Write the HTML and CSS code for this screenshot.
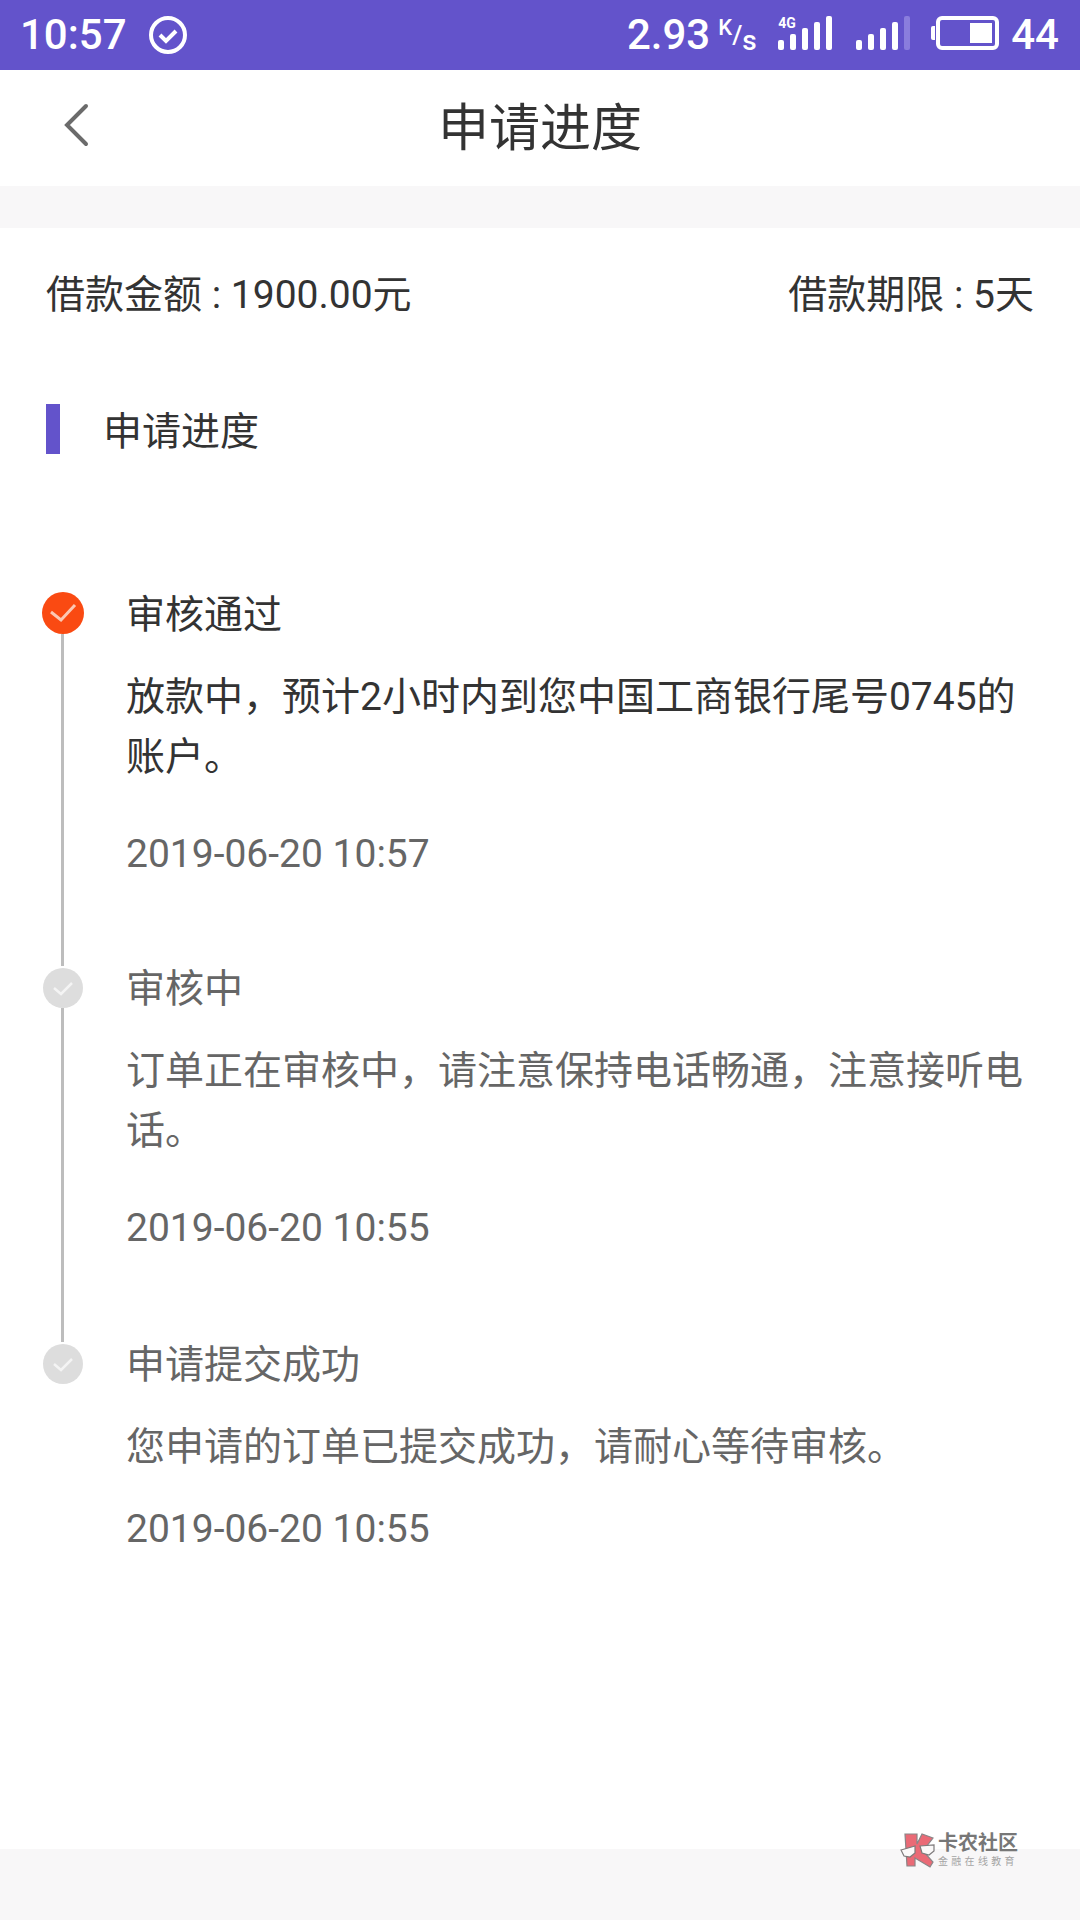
FILE: index.html
```html
<!DOCTYPE html>
<html lang="zh-CN">
<head>
    <meta charset="UTF-8">
    <title>申请进度</title>
    <meta name="viewport" content="width=device-width, initial-scale=1.0">
    <link rel="stylesheet" href="styles.css">
</head>
<body>

    <div class="statusbar">
        <div class="status-left">
            <span class="clock">10:57</span>
            <svg class="status-check" width="38" height="38" viewBox="0 0 38 38">
                <circle cx="19" cy="19" r="17" fill="none" stroke="#fff" stroke-width="4"/>
                <path d="M11 19l6 6 10-10" fill="none" stroke="#fff" stroke-width="4"/>
            </svg>
        </div>
        <div class="status-right">
            <span class="speed">2.93</span>
            <span class="speed-unit"><sup>K</sup>/<sub>s</sub></span>
            <div class="signal signal-4g">
                <span class="tag-4g">4G</span>
                <i class="b1"></i><i class="b2"></i><i class="b3"></i><i class="b4"></i><i class="b5"></i>
            </div>
            <div class="signal signal-plain">
                <i class="b1"></i><i class="b2"></i><i class="b3"></i><i class="b4"></i><i class="b5 off"></i>
            </div>
            <div class="battery"><div class="battery-level"></div></div>
            <span class="level">44</span>
        </div>
    </div>

    <header class="topbar">
        <svg class="back" width="28" height="46" viewBox="0 0 28 46">
            <path d="M24 4L5 23l19 19" fill="none" stroke="#6b6b6b" stroke-width="4" stroke-linecap="round"/>
        </svg>
        <h1>申请进度</h1>
    </header>

    <div class="divider"></div>

    <main class="content">
        <div class="summary">
            <span>借款金额 : 1900.00元</span>
            <span>借款期限 : 5天</span>
        </div>

        <div class="section-title">
            <span class="section-mark"></span>
            <h2>申请进度</h2>
        </div>

        <ul class="timeline">
            <li class="step step-active">
                <div class="rail">
                    <span class="dot">
                        <svg width="28" height="20" viewBox="0 0 28 20"><path d="M2 9l10 8L26 2" fill="none" stroke="#fbc8b4" stroke-width="3"/></svg>
                    </span>
                    <span class="line"></span>
                </div>
                <div class="step-body">
                    <h3>审核通过</h3>
                    <p>放款中，预计2小时内到您中国工商银行尾号0745的账户。</p>
                    <time>2019-06-20 10:57</time>
                </div>
            </li>
            <li class="step">
                <div class="rail">
                    <span class="dot">
                        <svg width="26" height="20" viewBox="0 0 26 20"><path d="M4 10l7 6L22 5" fill="none" stroke="#f4f4f4" stroke-width="2.5"/></svg>
                    </span>
                    <span class="line"></span>
                </div>
                <div class="step-body">
                    <h3>审核中</h3>
                    <p>订单正在审核中，请注意保持电话畅通，注意接听电话。</p>
                    <time>2019-06-20 10:55</time>
                </div>
            </li>
            <li class="step step-last">
                <div class="rail">
                    <span class="dot">
                        <svg width="26" height="20" viewBox="0 0 26 20"><path d="M4 10l7 6L22 5" fill="none" stroke="#f4f4f4" stroke-width="2.5"/></svg>
                    </span>
                </div>
                <div class="step-body">
                    <h3>申请提交成功</h3>
                    <p>您申请的订单已提交成功，请耐心等待审核。</p>
                    <time>2019-06-20 10:55</time>
                </div>
            </li>
        </ul>
    </main>

    <footer class="bottom"></footer>

    <div class="watermark">
        <svg width="36" height="36" viewBox="0 0 36 36">
            <path d="M5 1h12v10l5-10 11 4-10 13 10 11-3 5-15-9v8H7z" fill="#ea6a76" stroke="#8a8587" stroke-width="1.2"/>
            <path d="M1 17l14-4v7l-5 4-6-1z" fill="#fbf9f9" stroke="#7d7a7b" stroke-width="1.2"/>
            <path d="M20 13l14-1v6l-5 4-7-2z" fill="#fbf9f9" stroke="#7d7a7b" stroke-width="1.2"/>
        </svg>
        <div class="watermark-text">
            <strong>卡农社区</strong>
            <small>金融在线教育</small>
        </div>
    </div>

</body>
</html>
```

FILE: styles.css
```css
* {
    box-sizing: border-box;
}

body {
    width: 1080px;
    height: 1920px;
    margin: 0;
    position: relative;
    display: flex;
    flex-direction: column;
    overflow: hidden;
    font-family: 'Noto Sans CJK SC', Roboto, sans-serif;
    background-color: #fff;
    color: #333;
}

/* status bar */
.statusbar {
    height: 70px;
    padding: 0 20px;
    display: flex;
    align-items: center;
    justify-content: space-between;
    background-color: #6353cb;
    color: #fff;
    font-family: Roboto, sans-serif;
    font-weight: 500;
}

.status-left {
    display: flex;
    align-items: center;
}

.clock {
    font-size: 42px;
    line-height: 1;
}

.status-check {
    margin-left: 22px;
}

.status-right {
    display: flex;
    align-items: center;
}

.speed {
    font-size: 42px;
    line-height: 1;
    margin-right: 8px;
}

.speed-unit {
    width: 36px;
    font-size: 26px;
    line-height: 1;
    white-space: nowrap;
}

.speed-unit sup {
    font-size: 22px;
    vertical-align: 9px;
    line-height: 0;
}

.speed-unit sub {
    font-size: 28px;
    vertical-align: -6px;
    line-height: 0;
}

.signal {
    display: flex;
    align-items: flex-end;
    gap: 6px;
    height: 34px;
    margin-bottom: 4px;
    position: relative;
}

.signal i {
    display: block;
    width: 6px;
    border-radius: 2px;
    background: #fff;
}

.signal .b1 { height: 10px; }
.signal .b2 { height: 16px; }
.signal .b3 { height: 22px; }
.signal .b4 { height: 28px; }
.signal .b5 { height: 34px; }
.signal .off { background: #8a7ddd; }

.signal-4g {
    margin-left: 24px;
}

.tag-4g {
    position: absolute;
    left: 0;
    top: 0;
    font-size: 14px;
    line-height: 1;
    font-weight: 700;
}

.signal-plain {
    margin-left: 24px;
}

.battery {
    width: 63px;
    height: 34px;
    margin: 0 0 4px 26px;
    padding: 3px;
    border: 4px solid #fff;
    border-radius: 6px;
    display: flex;
    justify-content: flex-end;
    position: relative;
}

.battery::before {
    content: "";
    position: absolute;
    left: -9px;
    top: 6px;
    width: 4px;
    height: 14px;
    background: #fff;
    border-radius: 2px 0 0 2px;
}

.battery-level {
    width: 22px;
    background: #fff;
}

.level {
    margin-left: 12px;
    margin-right: 1px;
    font-size: 42px;
    line-height: 1;
}

/* header */
.topbar {
    height: 116px;
    display: flex;
    align-items: center;
    justify-content: center;
    position: relative;
}

.back {
    position: absolute;
    left: 62px;
    top: 32px;
}

h1 {
    margin: 0 0 7px;
    font-size: 51px;
    font-weight: 400;
    line-height: 1;
    color: #333;
}

.divider {
    height: 42px;
    background-color: #f8f7f8;
}

.content {
    flex: 1;
    padding: 0 46px;
}

.summary {
    display: flex;
    justify-content: space-between;
    padding-top: 41px;
    font-size: 39px;
    line-height: 52px;
    color: #333;
    font-family: Roboto, 'Noto Sans CJK SC', sans-serif;
}

.section-title {
    display: flex;
    align-items: center;
    margin-top: 83px;
    height: 50px;
}

.section-mark {
    width: 14px;
    height: 50px;
    background-color: #6353cb;
}

h2 {
    margin: 0 0 2px 43px;
    font-size: 39px;
    font-weight: 400;
    line-height: 50px;
    color: #333;
}

/* timeline */
.timeline {
    list-style: none;
    margin: 138px 0 0 -4px;
    padding: 0;
}

.step {
    display: flex;
}

.rail {
    width: 42px;
    display: flex;
    flex-direction: column;
    align-items: center;
    flex-shrink: 0;
}

.dot {
    width: 40px;
    height: 40px;
    flex-shrink: 0;
    border-radius: 50%;
    display: flex;
    align-items: center;
    justify-content: center;
    background-color: #ddd;
}

.step-active .dot {
    width: 42px;
    height: 42px;
    background-color: #fa4a12;
}

.line {
    flex: 1;
    width: 3px;
    margin: 0 0 2px -1px;
    background-color: #bdbdbd;
}

.step-body {
    margin-left: 42px;
    width: 916px;
    padding-bottom: 91px;
    color: #666;
}

.step-active .step-body {
    padding-bottom: 89px;
}

.step-last .step-body {
    padding-bottom: 0;
}

.step h3 {
    margin: -8px 0 0;
    font-size: 39px;
    font-weight: 400;
    line-height: 50px;
}

.step-active h3 {
    margin-top: -6px;
}

.step p {
    margin: 31px 0 0;
    font-size: 39px;
    line-height: 60px;
    font-family: Roboto, 'Noto Sans CJK SC', sans-serif;
}

.step time {
    display: block;
    margin-top: 42px;
    font-size: 39px;
    line-height: 50px;
    font-family: Roboto, sans-serif;
}

.step-last time {
    margin-top: 27px;
}

.step-active h3,
.step-active p {
    color: #333;
}

.bottom {
    height: 71px;
    background-color: #f8f7f8;
}

/* watermark over the footer edge */
.watermark {
    position: absolute;
    left: 900px;
    top: 1832px;
    display: flex;
    align-items: center;
    gap: 2px;
}

.watermark-text {
    display: flex;
    flex-direction: column;
    color: #777;
    font-family: Roboto, 'Noto Sans CJK SC', sans-serif;
}

.watermark-text strong {
    font-size: 20px;
    line-height: 23px;
    font-weight: 700;
}

.watermark-text small {
    font-size: 10px;
    line-height: 14px;
    letter-spacing: 3.3px;
    color: #a5a5a5;
}
```
